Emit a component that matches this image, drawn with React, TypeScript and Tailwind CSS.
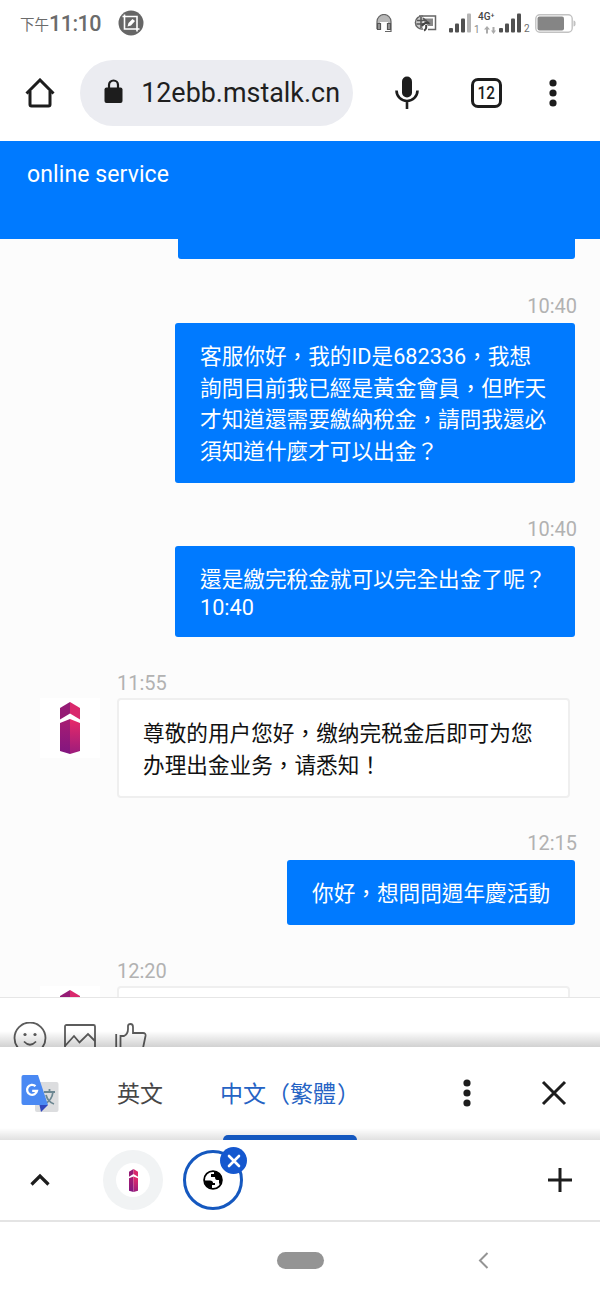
import type { ReactNode } from "react"

const sans = "font-['Roboto','Noto_Sans_CJK_TC',sans-serif]"
const sansSc = "font-['Roboto','Noto_Sans_CJK_SC',sans-serif]"

function Tower({ className, id }: { className: string; id: string }) {
  return (
    <svg viewBox="0 0 20 52" className={className} preserveAspectRatio="none">
      <defs>
        <linearGradient id={`${id}-l`} x1="0" y1="0" x2="0" y2="1">
          <stop offset="0" stopColor="#a81c72" />
          <stop offset="1" stopColor="#811680" />
        </linearGradient>
        <linearGradient id={`${id}-r`} x1="0" y1="0" x2="0" y2="1">
          <stop offset="0" stopColor="#e82a68" />
          <stop offset="1" stopColor="#9c1c7c" />
        </linearGradient>
      </defs>
      <path d="M0 6 10 0V11.5L0 17.5Z" fill="#951b75" />
      <path d="M20 6 10 0V11.5L20 17.5Z" fill="#d9296c" />
      <path d="M0 21 10 17V52L0 49Z" fill={`url(#${id}-l)`} />
      <path d="M20 21 10 17V52L20 49Z" fill={`url(#${id}-r)`} />
    </svg>
  )
}

function Signal({ weak }: { weak?: boolean }) {
  return (
    <svg width="22" height="20" viewBox="0 0 22 20" fill="#505050">
      <rect x="0" y="15" width="4" height="4.5" rx="1" />
      <rect x="6" y="10.5" width="4" height="9" rx="1" />
      <rect x="12" y="5.5" width="4" height="14" rx="1" />
      <rect x="18" y="0.5" width="4" height="19" rx="1" fill={weak ? "#b5b5b5" : "#505050"} />
    </svg>
  )
}

function StatusBar() {
  return (
    <div className="flex h-[46px] shrink-0 items-center pl-5 text-[#6b6b6b]">
      <div className="flex w-[82px] items-center whitespace-nowrap">
        <span className="mt-[5px] text-[14.5px] leading-5">下午</span>
        <span className="mt-[2px] text-[21.5px] leading-6 font-medium tracking-[-0.5px]">11:10</span>
      </div>
      <svg className="ml-4" width="26" height="26" viewBox="0 0 26 26" fill="none">
        <circle cx="13" cy="13" r="12.5" fill="#666" />
        <path d="M4.5 6.5H19V21.5M6.5 4.5V19H21.5" stroke="#fff" strokeWidth="1.6" />
        <path d="M9.5 16.5 10.5 13 14.5 9 17 11 13 15.5Z" fill="#fff" />
      </svg>

      <svg className="ml-[232px]" width="16" height="19" viewBox="0 0 16 19" fill="none">
        <path d="M1 12V7.5a7 7 0 0 1 14 0V12H12V8H4v4Z" fill="#b8b8b8" />
        <path d="M1 15V7.5a7 7 0 0 1 14 0V17.5H9" stroke="#666" strokeWidth="1.2" />
        <path d="M1.5 9.5h3v6h-3ZM11.5 9.5h3v6h-3Z" fill="#999" stroke="#555" strokeWidth="1.2" />
      </svg>
      <svg className="ml-[21px]" width="24" height="18" viewBox="0 0 24 18" fill="none">
        <path d="M6 2H22.5V15.5H15" stroke="#666" strokeWidth="1.5" />
        <path d="M9 4.5H20V12H15Z" fill="#888" />
        <path d="M10 2.2A6.5 6.5 0 1 0 10 15" fill="#ccc" stroke="#666" strokeWidth="1.4" />
        <path d="M4 6.5H14M3.5 10H12M8 3V14M10 4 17 10" stroke="#555" strokeWidth="1.5" />
        <path d="M9 12Q11 8 16 9M13 11Q14 15 11 16.5" stroke="#444" strokeWidth="2" />
      </svg>
      <div className="ml-3"><Signal weak /></div>
      <div className="mt-[-1px] ml-[3px] flex h-6 w-[24px] flex-col">
        <span className="pl-1 text-[10px] leading-[12px] font-medium whitespace-nowrap text-[#444]">4G⁺</span>
        <div className="flex items-center gap-1 text-[10px] leading-[14px] text-[#888]">
          <span>1</span>
          <svg width="12" height="8" viewBox="0 0 12 8" fill="#aaa">
            <path d="M3 0 6 3.5H4V7.5H2V3.5H0Z" />
            <path d="M9.5 8 12 4.5H10.5V1h-2V4.5H7Z" />
          </svg>
        </div>
      </div>
      <div className="ml-[1px]"><Signal /></div>
      <span className="mt-[11px] ml-[3px] w-[6px] text-[10px] leading-3">2</span>
      <svg className="ml-[5px]" width="41" height="19" viewBox="0 0 41 19" fill="none">
        <rect x="0.8" y="0.8" width="36.4" height="17.4" rx="4" stroke="#c2c2c2" strokeWidth="1.4" />
        <rect x="2.5" y="2.5" width="26.5" height="14" rx="2" fill="#858585" />
        <path d="M38.5 6.5q2 0 2 2v2q0 2-2 2Z" fill="#c2c2c2" />
      </svg>
    </div>
  )
}

function Dots() {
  return (
    <svg width="8" height="28" viewBox="0 0 8 28" fill="#1d1d1d">
      <circle cx="4" cy="4" r="3.6" />
      <circle cx="4" cy="14" r="3.6" />
      <circle cx="4" cy="24" r="3.6" />
    </svg>
  )
}

function AddressBar() {
  return (
    <div className="flex h-[95px] shrink-0 items-center pb-[2px] pl-[25px] text-[#1f1f1f]">
      <svg width="30" height="30" viewBox="0 0 30 30" fill="none" stroke="#1d1d1d" strokeWidth="3">
        <path d="M5 13V26.5Q5 28 6.5 28H23.5Q25 28 25 26.5V13" />
        <path d="M1.5 15.5 15 2 28.5 15.5" />
      </svg>
      <div className="ml-[25px] flex h-[66px] w-[273px] items-center rounded-full bg-[#ebecf1] pl-6">
        <svg className="mb-[2px]" width="19" height="25" viewBox="0 0 19 25">
          <path d="M5 10V6a4.5 4.5 0 0 1 9 0v4" fill="none" stroke="#1d1d1d" strokeWidth="2.2" />
          <rect x="0.5" y="8.5" width="18" height="15.5" rx="2" fill="#1d1d1d" />
        </svg>
        <div className="mt-[1px] ml-[17px] flex w-[200px] justify-end overflow-hidden text-[26.9px] leading-8 whitespace-nowrap">
          812ebb.mstalk.cn
        </div>
      </div>
      <svg className="ml-[41px]" width="26" height="34" viewBox="0 0 26 34">
        <rect x="8" y="0.5" width="10" height="21" rx="5" fill="#1d1d1d" />
        <path d="M2.5 14.5a10.5 10.5 0 0 0 21 0M13 25V33" fill="none" stroke="#1d1d1d" strokeWidth="2.6" />
      </svg>
      <div className="ml-[51px] flex h-[30px] w-[31px] items-center justify-center rounded-[7px] border-3 border-[#1d1d1d] text-[18px] leading-none font-medium">
        <span className="scale-x-85">12</span>
      </div>
      <div className="ml-[47px]"><Dots /></div>
    </div>
  )
}

function Sent({ time, className, children }: { time: string; className: string; children: ReactNode }) {
  return (
    <div className="flex flex-col items-end pr-[25px]">
      <time className="-mr-[2px] text-[20px] leading-5 text-[#b2b2b2]">{time}</time>
      <div className={`mt-[7px] rounded-[3px] bg-[#007aff] pt-[18px] pl-[25px] text-[21.65px] leading-[31.6px] whitespace-nowrap text-white ${className}`}>
        {children}
      </div>
    </div>
  )
}

function Received({ time, id, children }: { time: string; id: string; children?: ReactNode }) {
  return (
    <div className="flex pl-10">
      <div className="mt-[25px] flex h-[60px] w-[60px] justify-center bg-white pt-1">
        <Tower id={id} className="h-[52px] w-5" />
      </div>
      <div className="ml-[17px]">
        <time className="block text-[20px] leading-5 text-[#b2b2b2]">{time}</time>
        <div className={`mt-[5px] h-[100px] w-[453px] rounded-[4px] border-2 border-[#efefef] bg-white pt-[18px] pl-6 text-[21.65px] leading-[31.6px] whitespace-nowrap text-[#111] ${sansSc}`}>
          {children}
        </div>
      </div>
    </div>
  )
}

function Chat() {
  return (
    <div className="h-[758px] shrink-0 overflow-hidden bg-[#fcfcfc]">
      <div className="ml-[178px] h-5 w-[397px] rounded-b-[3px] bg-[#007aff]" />
      <div className="mt-[37px]">
        <Sent time="10:40" className="h-[160px] w-[400px]">
          客服你好，我的ID是682336，我想<br />
          詢問目前我已經是黃金會員，但昨天<br />
          才知道還需要繳納稅金，請問我還必<br />
          須知道什麼才可以出金？
        </Sent>
      </div>
      <div className="mt-9">
        <Sent time="10:40" className="h-[91px] w-[400px]">
          還是繳完稅金就可以完全出金了呢？
          <div className="leading-6">10:40</div>
        </Sent>
      </div>
      <div className="mt-9">
        <Received time="11:55" id="tower-a">
          尊敬的用户您好<span className={sans}>，</span>缴纳完税金后即可为您<br />
          办理出金业务<span className={sans}>，</span>请悉知<span className={sans}>！</span>
        </Received>
      </div>
      <div className="mt-[35px]">
        <Sent time="12:15" className="h-[65px] w-[288px]">你好，想問問週年慶活動</Sent>
      </div>
      <div className="mt-9">
        <Received time="12:20" id="tower-b" />
      </div>
    </div>
  )
}

function InputTools() {
  return (
    <div className="relative flex h-[50px] shrink-0 items-start gap-[17px] overflow-hidden border-t border-[#e6e6e6] bg-white pt-6 pl-[13px]">
      <svg width="34" height="34" viewBox="0 0 34 34" fill="none" stroke="#5c5c5c" strokeWidth="1.8">
        <circle cx="17" cy="16" r="15.5" />
        <path d="M11 19.5q6 6.5 12 0" />
        <circle cx="12" cy="12.5" r="1.6" fill="#5c5c5c" stroke="none" />
        <circle cx="22" cy="12.5" r="1.6" fill="#5c5c5c" stroke="none" />
      </svg>
      <svg className="mt-[2px]" width="32" height="32" viewBox="0 0 32 32" fill="none" stroke="#5c5c5c" strokeWidth="1.8">
        <rect x="1" y="1" width="30" height="30" rx="1.5" />
        <path d="M1 22 10 12 15.5 18.5 24 10 31 17" />
      </svg>
      <svg className="mt-[1px] ml-[2px]" width="32" height="32" viewBox="0 0 32 32" fill="none" stroke="#5c5c5c" strokeWidth="1.8">
        <path d="M1.2 11V30M5.5 30V13H9Q13 11 13 6V3Q13 1 15.5 1T18 4V10H28Q31 10 30.5 13L27 30" />
      </svg>
      <div className="absolute inset-x-0 bottom-0 h-4 bg-linear-to-b from-transparent to-black/18" />
    </div>
  )
}

function TranslateBar() {
  return (
    <div className="relative flex h-[93px] shrink-0 items-center overflow-hidden bg-white pl-[21px] text-[23px]">
      <svg width="38" height="38" viewBox="0 0 38 38">
        <rect x="14" y="7" width="23.5" height="30" rx="2" fill="#dcdddf" />
        <path d="M23 17H34M28.5 14V17M24 29Q31 25 32 17M25 20Q27 27 33 29" fill="none" stroke="#6c8792" strokeWidth="1.8" />
        <path d="M18.5 30H27L20 37Z" fill="#3147bd" />
        <path d="M2.5 0H17L27 30H2.5Q0.5 30 0.5 28V2Q0.5 0 2.5 0Z" fill="#4a89f3" />
        <path d="M14.5 11.2A5 5 0 1 0 16 15.8H11.2" fill="none" stroke="#fff" strokeWidth="2.3" />
      </svg>
      <span className="mt-1 ml-[58px] text-[#464646]">英文</span>
      <span className="mt-1 ml-[57px] flex w-[138px] whitespace-nowrap text-[#2563c4]">
        中文
        <span className="-mt-[2px] ml-[1px] font-['Noto_Sans_CJK_JP',sans-serif]">（</span>
        繁體
        <span className="-mt-[2px] ml-[1px] font-['Noto_Sans_CJK_JP',sans-serif]">）</span>
      </span>
      <div className="mb-[1px] ml-[105px]"><Dots /></div>
      <svg className="mb-[1px] ml-[70px]" width="26" height="26" viewBox="0 0 26 26" stroke="#1d1d1d" strokeWidth="3">
        <path d="M2 2 24 24M24 2 2 24" />
      </svg>
      <div className="absolute inset-x-0 bottom-0 h-3 bg-linear-to-b from-transparent to-black/12" />
      <div className="absolute bottom-0 left-[223px] h-[5px] w-[134px] rounded-t-[5px] bg-[#1558bf]" />
    </div>
  )
}

function TabStrip() {
  return (
    <div className="flex h-[82px] shrink-0 items-center border-b-2 border-[#e4e4e4] bg-white pl-[30px]">
      <svg className="mb-[2px]" width="20" height="13" viewBox="0 0 20 13" fill="none" stroke="#1d1d1d" strokeWidth="3.2">
        <path d="M1.5 11.5 10 3 18.5 11.5" />
      </svg>
      <div className="ml-[53px] flex size-[60px] items-center justify-center rounded-full bg-[#f1f3f4]">
        <div className="flex size-[34px] items-center justify-center rounded-full bg-white">
          <Tower id="tower-c" className="h-[23px] w-[9px]" />
        </div>
      </div>
      <div className="relative ml-5 flex size-[60px] items-center justify-center rounded-full border-3 border-[#1558bf]">
        <svg width="20" height="20" viewBox="0 0 20 20">
          <circle cx="10" cy="10" r="8.9" fill="#fff" stroke="#000" strokeWidth="1.8" />
          <path d="M1.5 10.5H7Q10 10.5 10 13H12V15H9V18.5Q2 17 1.5 10.5Z" />
          <path d="M11 1.5V4H8V7H12Q12 10 14 10H16V13.5L17.5 14Q20 9 17 4.5 14 1 11 1.5Z" />
        </svg>
        <div className="absolute -top-[6px] -right-[7px] flex size-[27px] items-center justify-center rounded-full bg-[#1558cf]">
          <svg width="14" height="14" viewBox="0 0 14 14" stroke="#fff" strokeWidth="2.6" strokeLinecap="round">
            <path d="M2 2 12 12M12 2 2 12" />
          </svg>
        </div>
      </div>
      <svg className="ml-[305px]" width="24" height="24" viewBox="0 0 24 24" stroke="#1d1d1d" strokeWidth="3">
        <path d="M12 0V24M0 12H24" />
      </svg>
    </div>
  )
}

export default function App() {
  return (
    <main className={`flex h-[1300px] w-[600px] flex-col overflow-hidden bg-white ${sans}`}>
      <StatusBar />
      <AddressBar />
      <header className="h-[98px] shrink-0 bg-[#007aff] pt-5 pl-[27px] text-[23px] leading-7 tracking-[0.1px] text-white">
        online service
      </header>
      <Chat />
      <InputTools />
      <TranslateBar />
      <TabStrip />
      <nav className="flex flex-1 items-center pb-[2px] pl-[277px]">
        <div className="h-[17px] w-[47px] rounded-full bg-[#949494]" />
        <svg className="ml-[154px]" width="11" height="17" viewBox="0 0 11 17" fill="none" stroke="#949494" strokeWidth="2">
          <path d="M9.5 1 2 8.5 9.5 16" />
        </svg>
      </nav>
    </main>
  )
}
